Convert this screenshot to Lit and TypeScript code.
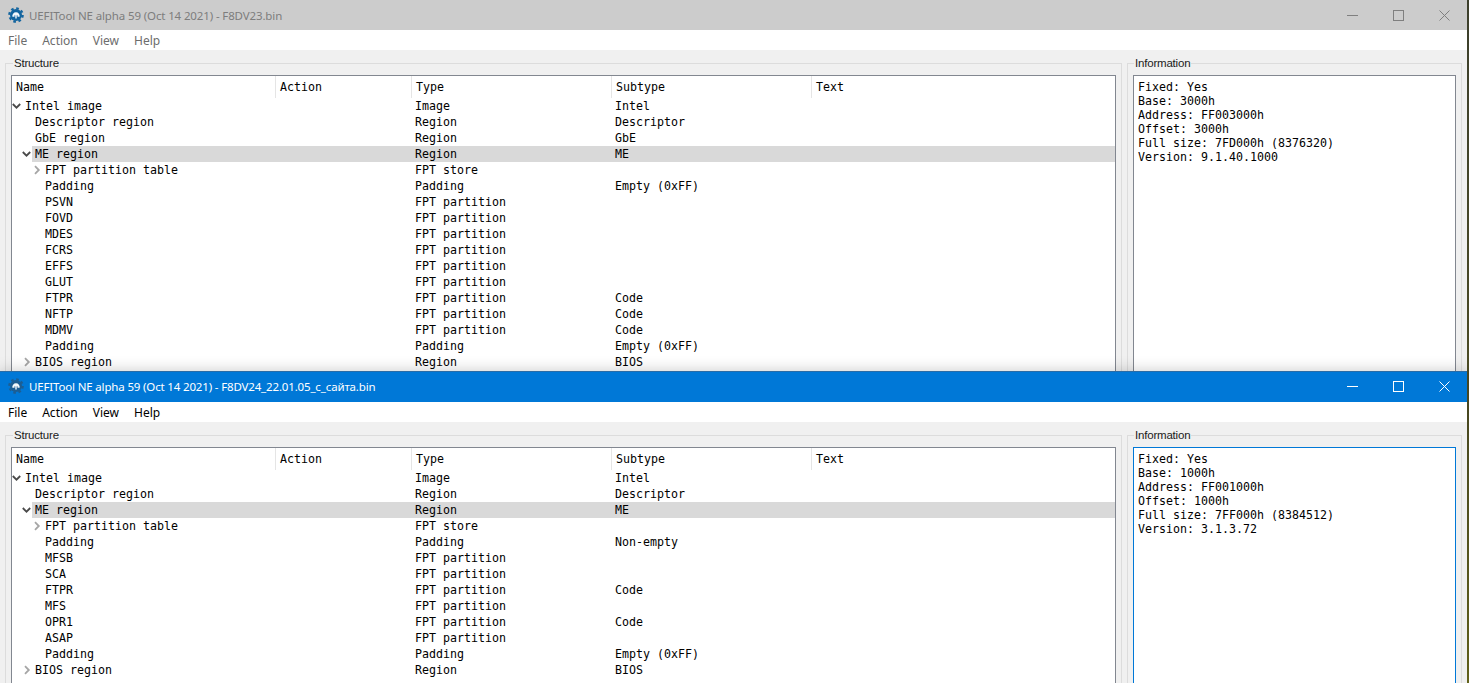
import { LitElement, html, css } from "lit";
import { customElement } from "lit/decorators.js";

type Row = { n: string; l: number; c?: "open" | "closed"; t?: string; s?: string; sel?: boolean };

const P = "FPT partition";
const top: Row[] = [
  { n: "Intel image", l: 0, c: "open", t: "Image", s: "Intel" },
  { n: "Descriptor region", l: 1, t: "Region", s: "Descriptor" },
  { n: "GbE region", l: 1, t: "Region", s: "GbE" },
  { n: "ME region", l: 1, c: "open", t: "Region", s: "ME", sel: true },
  { n: "FPT partition table", l: 2, c: "closed", t: "FPT store" },
  { n: "Padding", l: 2, t: "Padding", s: "Empty (0xFF)" },
  { n: "PSVN", l: 2, t: P },
  { n: "FOVD", l: 2, t: P },
  { n: "MDES", l: 2, t: P },
  { n: "FCRS", l: 2, t: P },
  { n: "EFFS", l: 2, t: P },
  { n: "GLUT", l: 2, t: P },
  { n: "FTPR", l: 2, t: P, s: "Code" },
  { n: "NFTP", l: 2, t: P, s: "Code" },
  { n: "MDMV", l: 2, t: P, s: "Code" },
  { n: "Padding", l: 2, t: "Padding", s: "Empty (0xFF)" },
  { n: "BIOS region", l: 1, c: "closed", t: "Region", s: "BIOS" },
];
const bottom: Row[] = [
  { n: "Intel image", l: 0, c: "open", t: "Image", s: "Intel" },
  { n: "Descriptor region", l: 1, t: "Region", s: "Descriptor" },
  { n: "ME region", l: 1, c: "open", t: "Region", s: "ME", sel: true },
  { n: "FPT partition table", l: 2, c: "closed", t: "FPT store" },
  { n: "Padding", l: 2, t: "Padding", s: "Non-empty" },
  { n: "MFSB", l: 2, t: P },
  { n: "SCA", l: 2, t: P },
  { n: "FTPR", l: 2, t: P, s: "Code" },
  { n: "MFS", l: 2, t: P },
  { n: "OPR1", l: 2, t: P, s: "Code" },
  { n: "ASAP", l: 2, t: P },
  { n: "Padding", l: 2, t: "Padding", s: "Empty (0xFF)" },
  { n: "BIOS region", l: 1, c: "closed", t: "Region", s: "BIOS" },
];

const gear = html`<svg class="gear" width="16" height="16" viewBox="0 0 16 16">
  <circle cx="8" cy="8" r="6" class="g"></circle>
  <circle cx="8" cy="8" r="6.6" fill="none" class="t" stroke-width="2.4" stroke-dasharray="2.6 2.58"></circle>
  <path d="M4.4 9.8A3.7 3.7 0 1 1 11.6 9.8L9.5 9.8 9.5 8.2 8.7 8.2 8.7 11.4 7.3 11.4 7.3 8.2 6.5 8.2 6.5 9.8Z" fill="#f4f8fb"></path>
</svg>`;

const chevDown = html`<svg class="chev" width="10" height="16" viewBox="0 0 10 16"><path d="M0.8 6L4.5 9.7 8.2 6" fill="none" stroke="#4a4a4a" stroke-width="1.8"></path></svg>`;
const chevRight = html`<svg class="chev" width="10" height="16" viewBox="0 0 10 16"><path d="M3 4.2L6.8 8 3 11.8" fill="none" stroke="#a6a6a6" stroke-width="1.8"></path></svg>`;

@customElement("app-root")
export class AppRoot extends LitElement {
  static styles = css`
    :host {
      display: block;
      width: 1469px;
      height: 683px;
      overflow: hidden;
      background: linear-gradient(180deg, #3c3f2c 0%, #4a4a26 50%, #6b6a1e 100%);
      font-family: "Noto Sans", "Open Sans", sans-serif;
      font-size: 12px;
    }
    .win {
      width: 1467px;
      height: 371px;
      overflow: hidden;
      display: flex;
      flex-direction: column;
      background: #fff;
    }
    .win.active {
      height: 312px;
      position: relative;
      border-top: 1px solid #2a6ca6;
      box-shadow: 0 0 14px rgba(0, 0, 0, 0.22);
    }
    .title {
      flex: none;
      height: 30px;
      box-sizing: border-box;
      display: flex;
      align-items: center;
      padding-left: 8px;
      background: #cccccc;
      color: #7d7d7d;
      font-size: 11.5px;
      letter-spacing: -0.13px;
      white-space: nowrap;
    }
    .active .title {
      background: #0078d7;
      color: #fff;
      padding-bottom: 2px;
      letter-spacing: -0.16px;
    }
    .gear { margin-right: 5px; }
    .gear .g { fill: #14659f; }
    .gear .t { stroke: #14659f; }
    .active .gear .g { fill: #1d5e93; }
    .active .gear .t { stroke: #1d5e93; }
    .title .text { flex: 1; }
    .ctl {
      width: 46px;
      height: 28px;
      display: flex;
      align-items: center;
      justify-content: center;
      stroke: #7f7f7f;
    }
    .active .ctl { stroke: #fff; }
    .menu {
      flex: none;
      height: 20px;
      display: flex;
      align-items: center;
      padding-left: 8px;
      color: #6d6d6d;
    }
    .active .menu { color: #000; }
    .menu span { margin-right: 15px; }
    .body {
      flex: none;
      height: 640px;
      background: #f0f0f0;
      display: flex;
      gap: 5px;
      padding: 5px 5px 0;
      box-sizing: border-box;
    }
    fieldset {
      margin: 0;
      border: 1px solid #dcdcdc;
      padding: 4px 5px 0 5px;
      min-width: 0;
      box-sizing: border-box;
      height: 620px;
    }
    fieldset.structure { width: 1117px; }
    fieldset.info { width: 335px; }
    legend {
      margin-left: 2px;
      padding: 0 1px;
      height: 16px;
      line-height: 16px;
      color: #1a1a1a;
      font-family: "Liberation Sans", Arial, sans-serif;
      font-size: 11.5px;
      letter-spacing: -0.2px;
    }
    .info legend { margin-left: 1px; }
    .box {
      height: 560px;
      background: #fff;
      border: 1px solid #828790;
      font-family: "DejaVu Sans Mono", "Liberation Mono", monospace;
      font-size: 11.63px;
      color: #000;
    }
    .active .info .box { border-color: #0078d7; }
    .head, .row {
      display: grid;
      grid-template-columns: 264px 136px 200px 200px 1fr;
    }
    .head { height: 22px; line-height: 22px; }
    .head div { padding-left: 4px; border-right: 1px solid #e5e5e5; }
    .head div:last-child { border-right: 0; }
    .row { height: 16px; line-height: 16px; }
    .name { display: flex; }
    .slot { flex: none; width: 10px; height: 16px; }
    .l1 { padding-left: 10px; }
    .l2 { padding-left: 20px; }
    .label { flex: 1; padding-left: 3px; }
    .cell { padding-left: 3px; }
    .sel .label, .sel .cell { background: #d9d9d9; }
    .chev { display: block; }
    .lines { padding: 4px 0 0 4px; line-height: 14px; white-space: pre; }
  `;

  private renderWindow(title: string, rows: Row[], info: string, active: boolean) {
    return html`<div class="win ${active ? "active" : ""}">
      <div class="title">
        ${gear}
        <span class="text">${title}</span>
        <div class="ctl"><svg width="11" height="11"><path d="M0 5.5H11" fill="none"></path></svg></div>
        <div class="ctl"><svg width="11" height="11"><rect x="0.5" y="0.5" width="10" height="10" fill="none"></rect></svg></div>
        <div class="ctl"><svg width="11" height="11"><path d="M0.5 0.5L10.5 10.5M10.5 0.5L0.5 10.5" fill="none"></path></svg></div>
      </div>
      <div class="menu"><span>File</span><span>Action</span><span>View</span><span>Help</span></div>
      <div class="body">
        <fieldset class="structure">
          <legend>Structure</legend>
          <div class="box">
            <div class="head"><div>Name</div><div>Action</div><div>Type</div><div>Subtype</div><div>Text</div></div>
            ${rows.map(
              (r) => html`<div class="row ${r.sel ? "sel" : ""}">
                <div class="name l${r.l}">
                  <div class="slot">${r.c === "open" ? chevDown : r.c === "closed" ? chevRight : ""}</div>
                  <div class="label">${r.n}</div>
                </div>
                <div class="cell"></div>
                <div class="cell">${r.t ?? ""}</div>
                <div class="cell">${r.s ?? ""}</div>
                <div class="cell"></div>
              </div>`
            )}
          </div>
        </fieldset>
        <fieldset class="info">
          <legend>Information</legend>
          <div class="box"><div class="lines">${info}</div></div>
        </fieldset>
      </div>
    </div>`;
  }

  render() {
    return html`
      ${this.renderWindow(
        "UEFITool NE alpha 59 (Oct 14 2021) - F8DV23.bin",
        top,
        "Fixed: Yes\nBase: 3000h\nAddress: FF003000h\nOffset: 3000h\nFull size: 7FD000h (8376320)\nVersion: 9.1.40.1000",
        false
      )}
      ${this.renderWindow(
        "UEFITool NE alpha 59 (Oct 14 2021) - F8DV24_22.01.05_c_сайта.bin",
        bottom,
        "Fixed: Yes\nBase: 1000h\nAddress: FF001000h\nOffset: 1000h\nFull size: 7FF000h (8384512)\nVersion: 3.1.3.72",
        true
      )}
    `;
  }
}
